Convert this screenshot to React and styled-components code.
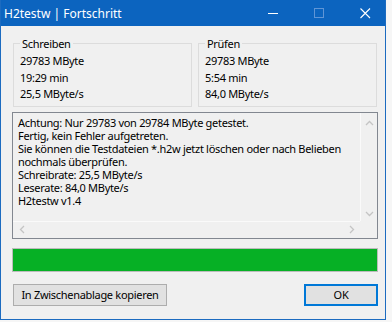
import React from 'react';
import styled, { createGlobalStyle } from 'styled-components';

// dialog data
const writeStats = ['29783 MByte', '19:29 min', '25,5 MByte/s'];
const verifyStats = ['29783 MByte', '5:54 min', '84,0 MByte/s'];
const logLines = [
  'Achtung: Nur 29783 von 29784 MByte getestet.',
  'Fertig, kein Fehler aufgetreten.',
  'Sie können die Testdateien *.h2w jetzt löschen oder nach Belieben',
  'nochmals überprüfen.',
  'Schreibrate: 25,5 MByte/s',
  'Leserate: 84,0 MByte/s',
  'H2testw v1.4',
];

// small chevrons for the disabled scrollbars
const Chevron = ({ dir }) => {
  const points = {
    up: '1,6 4.5,2.5 8,6',
    down: '1,3 4.5,6.5 8,3',
    left: '6,1 2.5,4.5 6,8',
    right: '3,1 6.5,4.5 3,8',
  }[dir];
  return (
    <svg width="9" height="9" viewBox="0 0 9 9">
      <polyline points={points} fill="none" stroke="#c4c4c4" strokeWidth="1.3" />
    </svg>
  );
};

const Stats = ({ title, items }) => (
  <GroupBox>
    <Legend>{title}</Legend>
    {items.map((item) => (
      <Value key={item}>{item}</Value>
    ))}
  </GroupBox>
);

// App Component
const App = () => {
  return (
    <>
      <GlobalStyle />
      <Window>
        <TitleBar>
          <Title>H2testw | Fortschritt</Title>
          <Controls>
            <CaptionButton>
              <svg width="11" height="11" viewBox="0 0 11 11">
                <line x1="0" y1="5.5" x2="10" y2="5.5" stroke="#fff" strokeWidth="1" />
              </svg>
            </CaptionButton>
            <CaptionButton>
              <svg width="11" height="11" viewBox="0 0 11 11">
                <rect x="0.5" y="0.5" width="9" height="9" fill="none" stroke="#5f95d6" strokeWidth="1" />
              </svg>
            </CaptionButton>
            <CaptionButton>
              <svg width="11" height="11" viewBox="0 0 11 11">
                <path d="M0.5 0.5 L10 10 M10 0.5 L0.5 10" stroke="#fff" strokeWidth="1.1" />
              </svg>
            </CaptionButton>
          </Controls>
        </TitleBar>
        <Body>
          <GroupRow>
            <Stats title="Schreiben" items={writeStats} />
            <Stats title="Prüfen" items={verifyStats} />
          </GroupRow>
          <LogBox>
            <LogText>
              {logLines.map((line) => (
                <div key={line}>{line}</div>
              ))}
            </LogText>
            <VScroll>
              <Chevron dir="up" />
              <Chevron dir="down" />
            </VScroll>
            <HScroll>
              <Chevron dir="left" />
              <Chevron dir="right" />
            </HScroll>
            <Corner />
          </LogBox>
          <Progress>
            <ProgressFill style={{ width: '100%' }} />
          </Progress>
          <ButtonRow>
            <Button>In Zwischenablage kopieren</Button>
            <Button $default>OK</Button>
          </ButtonRow>
        </Body>
      </Window>
    </>
  );
};

// styled components
const GlobalStyle = createGlobalStyle`
  body {
    margin: 0;
    background: #f6f6f6;
    font-family: "Noto Sans", "Open Sans", sans-serif;
    font-size: 11px;
    letter-spacing: -0.3px;
    color: #000;
  }
`;

const Window = styled.div`
  width: 386px;
  height: 320px;
  box-sizing: border-box;
  border: 1px solid #1c6bc0;
  border-top: none;
  background: #f0f0f0;
  display: flex;
  flex-direction: column;
`;

const TitleBar = styled.div`
  height: 26px;
  flex: none;
  background: #0c64bf;
  display: flex;
  align-items: center;
  padding-left: 3px;
  overflow: hidden;
`;

const Title = styled.div`
  color: #fff;
  font-size: 12px;
  letter-spacing: 0;
  flex: 1;
`;

const Controls = styled.div`
  display: flex;
  height: 100%;
  margin-right: -3px;
`;

const CaptionButton = styled.div`
  width: 46px;
  display: flex;
  align-items: center;
  justify-content: center;
`;

const Body = styled.div`
  flex: 1;
  display: flex;
  flex-direction: column;
  padding: 10px 7px 0 11px;
`;

const GroupRow = styled.div`
  display: grid;
  grid-template-columns: 179px 179px;
  column-gap: 6px;
  padding-left: 1px;
`;

const GroupBox = styled.fieldset`
  margin: 0;
  min-width: 0;
  border: 1px solid #dcdcdc;
  padding: 2px 6px 3px 6px;
`;

const Legend = styled.legend`
  padding: 0 2px;
  line-height: 15px;
`;

const Value = styled.div`
  line-height: 16.5px;
`;

const LogBox = styled.div`
  margin-top: 5px;
  height: 127px;
  box-sizing: border-box;
  border: 1px solid #828790;
  display: grid;
  grid-template-columns: 1fr 17px;
  grid-template-rows: 1fr 17px;
`;

const LogText = styled.div`
  padding: 3px 5px 0;
  line-height: 13px;
  white-space: nowrap;
  overflow: hidden;
`;

const VScroll = styled.div`
  border-left: 1px solid #fafafa;
  display: flex;
  flex-direction: column;
  justify-content: space-between;
  align-items: center;
  padding: 6px 0 3px;
`;

const HScroll = styled.div`
  border-top: 1px solid #fafafa;
  display: flex;
  justify-content: space-between;
  align-items: center;
  padding: 0 4px 0 5px;
`;

const Corner = styled.div`
  background: #f0f0f0;
`;

const Progress = styled.div`
  margin-top: 9px;
  height: 24px;
  box-sizing: border-box;
  border: 1px solid #bcbcbc;
  background: #e6e6e6;
  display: flex;
`;

const ProgressFill = styled.div`
  background: #06b025;
`;

const ButtonRow = styled.div`
  margin-top: 12px;
  display: flex;
  justify-content: space-between;
  padding-left: 1px;
`;

const Button = styled.button`
  height: 22px;
  box-sizing: border-box;
  width: ${({ $default }) => ($default ? '74px' : '154px')};
  margin: 0;
  padding: 0;
  font-family: inherit;
  font-size: 11px;
  letter-spacing: -0.3px;
  color: #000;
  background: #e1e1e1;
  border: ${({ $default }) => ($default ? '2px solid #0078d7' : '1px solid #adadad')};
`;

export default App;
